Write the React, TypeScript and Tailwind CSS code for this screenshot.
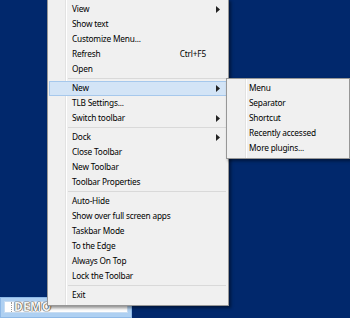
import type { ReactNode } from "react";

type Item =
  | { kind: "sep" }
  | { kind: "item"; label: string; shortcut?: string; sub?: boolean; active?: boolean };

const mainItems: Item[] = [
  { kind: "item", label: "View", sub: true },
  { kind: "item", label: "Show text" },
  { kind: "item", label: "Customize Menu..." },
  { kind: "item", label: "Refresh", shortcut: "Ctrl+F5" },
  { kind: "item", label: "Open" },
  { kind: "sep" },
  { kind: "item", label: "New", sub: true, active: true },
  { kind: "item", label: "TLB Settings..." },
  { kind: "item", label: "Switch toolbar", sub: true },
  { kind: "sep" },
  { kind: "item", label: "Dock", sub: true },
  { kind: "item", label: "Close Toolbar" },
  { kind: "item", label: "New Toolbar" },
  { kind: "item", label: "Toolbar Properties" },
  { kind: "sep" },
  { kind: "item", label: "Auto-Hide" },
  { kind: "item", label: "Show over full screen apps" },
  { kind: "item", label: "Taskbar Mode" },
  { kind: "item", label: "To the Edge" },
  { kind: "item", label: "Always On Top" },
  { kind: "item", label: "Lock the Toolbar" },
  { kind: "sep" },
  { kind: "item", label: "Exit" },
];

const subItems = ["Menu", "Separator", "Shortcut", "Recently accessed", "More plugins..."];

function Arrow() {
  return (
    <svg width="4" height="7" viewBox="0 0 4 7" aria-hidden="true">
      <path d="M0 0 L4 3.5 L0 7 Z" fill="#222" />
    </svg>
  );
}

function Row({ children, active, indent }: { children: ReactNode; active?: boolean; indent: string }) {
  return (
    <div
      className={`relative mx-[1px] flex h-[15px] items-center border pr-[6px] ${indent} ${
        active ? "border-[#a6c8ec] bg-[#d3e4f6]" : "border-transparent"
      }`}
    >
      {children}
    </div>
  );
}

function Separator({ left }: { left: string }) {
  return (
    <div className={`flex h-[4px] items-center ${left}`}>
      <div className="h-[2px] w-full border-t border-[#d9d9d9] border-b-white" />
    </div>
  );
}

export default function App() {
  return (
    <div
      className="relative h-[318px] w-[350px] overflow-hidden bg-[#01286c] text-[8.3px] leading-none tracking-[-0.2px] text-black"
      style={{ fontFamily: '"Noto Sans", "Liberation Sans", sans-serif' }}
    >
      {/* DEMO toolbar */}
      <div className="absolute left-0 top-[297px] h-[21px] w-[132px] border border-[#8db8e6] bg-[#aed0f2] p-[3px] pb-[4px]">
        <div className="flex h-full items-center gap-[2px] border border-[#c7dcf2] bg-white pl-[6px]">
          <div className="h-[10px] w-0 border-l border-dotted border-[#9a9a9a]" />
          <span className="text-[12px] font-bold tracking-[0.3px] text-[#f4f4f4] [text-shadow:0_0_1px_#333,0_0_1px_#333,0_0_1px_#333]">
            DEMO
          </span>
        </div>
      </div>

      {/* main context menu */}
      <div className="absolute left-[47px] top-[-1px] w-[182px] border border-[#979797] bg-[#f0f0f0] py-[2px] shadow-[2px_2px_3px_rgba(0,0,0,0.45)]">
        <div className="absolute bottom-0 left-[17px] top-0 w-[2px] border-l border-[#e2e2e2] bg-white" />
        {mainItems.map((item, i) =>
          item.kind === "sep" ? (
            <Separator key={i} left="ml-[20px] mr-[2px]" />
          ) : (
            <Row key={i} active={item.active} indent="pl-[22px]">
              <span className="relative flex-1">{item.label}</span>
              {item.shortcut && <span className="mr-[14px]">{item.shortcut}</span>}
              {item.sub && <Arrow />}
            </Row>
          )
        )}
      </div>

      {/* "New" submenu */}
      <div className="absolute left-[226px] top-[78px] w-[124px] border border-[#979797] bg-[#f0f0f0] py-[2px] shadow-[2px_2px_3px_rgba(0,0,0,0.45)]">
        <div className="absolute bottom-0 left-[18px] top-0 w-[2px] border-l border-[#e2e2e2] bg-white" />
        {subItems.map((label) => (
          <Row key={label} indent="pl-[20px]">
            <span className="relative">{label}</span>
          </Row>
        ))}
      </div>
    </div>
  );
}
